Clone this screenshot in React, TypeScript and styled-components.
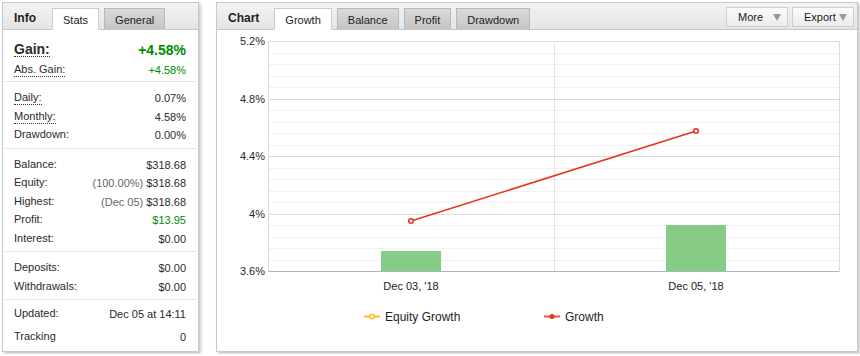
import React from 'react'
import styled, { createGlobalStyle } from 'styled-components'

const GlobalStyle = createGlobalStyle`
  html, body {
    margin: 0;
    padding: 0;
    background: #ffffff;
  }
  body {
    font-family: "Liberation Sans", Arial, sans-serif;
    font-size: 11px;
    color: #333333;
  }
`

const Page = styled.div`
  display: flex;
  gap: 17px;
  padding: 2px;
  width: 860px;
  box-sizing: border-box;
`

const Panel = styled.section<{ $width: number }>`
  display: flex;
  flex-direction: column;
  width: ${p => p.$width}px;
  height: 350px;
  box-sizing: border-box;
  border: 1px solid #c8c8c8;
  background: #ffffff;
  box-shadow: 2px 2px 3px rgba(0, 0, 0, 0.22);
`

const Header = styled.header`
  display: flex;
  align-items: flex-end;
  height: 27px;
  box-sizing: border-box;
  padding: 0 3px 0 11px;
  border-bottom: 1px solid #c8c8c8;
  background: linear-gradient(#f3f3f3, #e4e4e4);
`

const HeaderTitle = styled.h2<{ $gap: number }>`
  margin: 0 ${p => p.$gap}px 0 0;
  height: 21px;
  line-height: 20px;
  font-size: 12px;
  font-weight: bold;
  color: #1e1e1e;
`

const Tabs = styled.nav`
  display: flex;
  gap: 5px;
  margin-bottom: -1px;
`

const Tab = styled.span<{ $active?: boolean }>`
  display: block;
  height: 22px;
  box-sizing: border-box;
  padding: 0 10px;
  line-height: 22px;
  font-size: 11px;
  color: #222222;
  border: 1px solid ${p => (p.$active ? '#cccccc' : '#b8b8b8')};
  border-bottom-color: ${p => (p.$active ? '#ffffff' : '#c8c8c8')};
  background: ${p => (p.$active ? '#ffffff' : 'linear-gradient(#dadada, #c5c5c5)')};
`

const Actions = styled.div`
  display: flex;
  gap: 4px;
  margin-left: auto;
  align-self: flex-start;
  margin-top: 4px;
`

const DropButton = styled.button`
  display: flex;
  align-items: center;
  justify-content: space-between;
  width: 62px;
  height: 20px;
  box-sizing: border-box;
  padding: 0 6px 0 11px;
  border: 1px solid #cfcfcf;
  background: linear-gradient(#fafafa, #ececec);
  font-family: "Liberation Sans", Arial, sans-serif;
  font-size: 11px;
  color: #222222;
`

const Caret = styled.span`
  width: 0;
  height: 0;
  border-left: 4px solid transparent;
  border-right: 4px solid transparent;
  border-top: 7px solid #9a9a9a;
`

const StatsBody = styled.div`
  display: flex;
  flex-direction: column;
`

const Group = styled.div<{ $top?: number; $bottom?: number; $last?: boolean }>`
  margin: 0 2px;
  padding: ${p => p.$top ?? 7}px 10px ${p => p.$bottom ?? 3}px 9px;
  border-bottom: ${p => (p.$last ? 'none' : '1px solid #e3e3e3')};
`

const Row = styled.div<{ $height?: number; $big?: boolean }>`
  display: flex;
  align-items: center;
  justify-content: space-between;
  height: ${p => p.$height ?? 18.5}px;
  font-size: ${p => (p.$big ? 14 : 11)}px;
  font-weight: ${p => (p.$big ? 'bold' : 'normal')};
`

const Label = styled.span<{ $dotted?: boolean }>`
  line-height: 13px;
  color: #2a2a2a;
  border-bottom: ${p => (p.$dotted ? '1px dotted #333333' : '1px solid transparent')};
`

const Value = styled.span<{ $tone?: 'green' | 'plain' }>`
  color: ${p => (p.$tone === 'green' ? '#008a00' : '#2a2a2a')};
`

const Note = styled.span`
  color: #666666;
  margin-right: 3px;
`

const ChartBody = styled.div`
  flex: 1;
`

const ChartSvg = styled.svg`
  display: block;
  font-family: "Liberation Sans", Arial, sans-serif;
`

type Stat = {
  label: string
  value: string
  note?: string
  dotted?: boolean
  green?: boolean
}

const PLOT_LEFT = 268.5
const PLOT_RIGHT = 839.5
const PLOT_TOP = 41
const STEP = 11.5
const yLabels = ['5.2%', '4.8%', '4.4%', '4%', '3.6%']

const Chart = () => {
  const lines = Array.from({ length: 20 }, (_, i) => i)
  const p1 = { x: 411, y: 221 }
  const p2 = { x: 696, y: 131 }
  const red = '#e8321a'
  return (
    <ChartSvg width={640} height={320} viewBox="217 30 640 320">
      {lines.map(i => {
        const y = Math.round(PLOT_TOP + i * STEP) + 0.5
        const major = i % 5 === 0
        return (
          <line
            key={i}
            x1={PLOT_LEFT}
            x2={PLOT_RIGHT}
            y1={y}
            y2={y}
            stroke={major ? '#dcdcdc' : '#f1f1f1'}
            strokeWidth={1}
          />
        )
      })}
      <line x1={PLOT_LEFT} x2={PLOT_LEFT} y1={41} y2={271} stroke="#dcdcdc" />
      <line x1={554.5} x2={554.5} y1={41} y2={271} stroke="#e4e4e4" />
      <line x1={PLOT_RIGHT} x2={PLOT_RIGHT} y1={41} y2={271} stroke="#dcdcdc" />
      {yLabels.map((t, i) => (
        <text
          key={t}
          x={265}
          y={PLOT_TOP + i * STEP * 5 + 4}
          textAnchor="end"
          fontSize={11}
          fill="#2a2a2a"
        >
          {t}
        </text>
      ))}
      <rect x={381} y={251} width={60} height={20} fill="#86cc86" />
      <rect x={666} y={225} width={60} height={46} fill="#86cc86" />
      <line x1={PLOT_LEFT} x2={PLOT_RIGHT} y1={271.5} y2={271.5} stroke="#a9b6c4" />
      <line x1={p1.x} y1={p1.y} x2={p2.x} y2={p2.y} stroke={red} strokeWidth={1.5} />
      <circle cx={p1.x} cy={p1.y} r={2.3} fill="#ffffff" stroke={red} strokeWidth={1.5} />
      <circle cx={p2.x} cy={p2.y} r={2.3} fill="#ffffff" stroke={red} strokeWidth={1.5} />
      <text x={411} y={290} textAnchor="middle" fontSize={11} fill="#222">
        Dec 03, '18
      </text>
      <text x={696} y={290} textAnchor="middle" fontSize={11} fill="#222">
        Dec 05, '18
      </text>
      <line x1={364} x2={380} y1={316.5} y2={316.5} stroke="#ffbf1a" strokeWidth={2} />
      <circle cx={372} cy={316.5} r={2.3} fill="#ffffff" stroke="#ffbf1a" strokeWidth={1.5} />
      <text x={385} y={320.5} fontSize={12} fill="#1e1e1e">
        Equity Growth
      </text>
      <line x1={544} x2={560} y1={316.5} y2={316.5} stroke="#ff5050" strokeWidth={2} />
      <circle cx={552} cy={316.5} r={2.5} fill="#e8321a" />
      <text x={565} y={320.5} fontSize={12} fill="#1e1e1e">
        Growth
      </text>
    </ChartSvg>
  )
}

const StatRow = ({ stat, height }: { stat: Stat; height?: number }) => (
  <Row $height={height}>
    <Label $dotted={stat.dotted}>{stat.label}</Label>
    <Value $tone={stat.green ? 'green' : 'plain'}>
      {stat.note && <Note>{stat.note}</Note>}
      {stat.value}
    </Value>
  </Row>
)

export default function App() {
  return (
    <>
      <GlobalStyle />
      <Page>
        <Panel $width={197}>
          <Header>
            <HeaderTitle $gap={16}>Info</HeaderTitle>
            <Tabs>
              <Tab $active>Stats</Tab>
              <Tab>General</Tab>
            </Tabs>
          </Header>
          <StatsBody>
            <Group $top={9} $bottom={2}>
              <Row $big $height={22}>
                <Label $dotted>Gain:</Label>
                <Value $tone="green">+4.58%</Value>
              </Row>
              <StatRow stat={{ label: 'Abs. Gain:', value: '+4.58%', dotted: true, green: true }} />
            </Group>
            <Group>
              <StatRow stat={{ label: 'Daily:', value: '0.07%', dotted: true }} />
              <StatRow stat={{ label: 'Monthly:', value: '4.58%', dotted: true }} />
              <StatRow stat={{ label: 'Drawdown:', value: '0.00%' }} />
            </Group>
            <Group>
              <StatRow stat={{ label: 'Balance:', value: '$318.68' }} />
              <StatRow stat={{ label: 'Equity:', value: '$318.68', note: '(100.00%)' }} />
              <StatRow stat={{ label: 'Highest:', value: '$318.68', note: '(Dec 05)' }} />
              <StatRow stat={{ label: 'Profit:', value: '$13.95', green: true }} />
              <StatRow stat={{ label: 'Interest:', value: '$0.00' }} />
            </Group>
            <Group>
              <StatRow stat={{ label: 'Deposits:', value: '$0.00' }} />
              <StatRow stat={{ label: 'Withdrawals:', value: '$0.00' }} />
            </Group>
            <Group $top={2} $last>
              <StatRow height={23} stat={{ label: 'Updated:', value: 'Dec 05 at 14:11' }} />
              <StatRow height={23} stat={{ label: 'Tracking', value: '0' }} />
            </Group>
          </StatsBody>
        </Panel>
        <Panel $width={642}>
          <Header>
            <HeaderTitle $gap={15}>Chart</HeaderTitle>
            <Tabs>
              <Tab $active>Growth</Tab>
              <Tab>Balance</Tab>
              <Tab>Profit</Tab>
              <Tab>Drawdown</Tab>
            </Tabs>
            <Actions>
              <DropButton>
                More <Caret />
              </DropButton>
              <DropButton>
                Export <Caret />
              </DropButton>
            </Actions>
          </Header>
          <ChartBody>
            <Chart />
          </ChartBody>
        </Panel>
      </Page>
    </>
  )
}
